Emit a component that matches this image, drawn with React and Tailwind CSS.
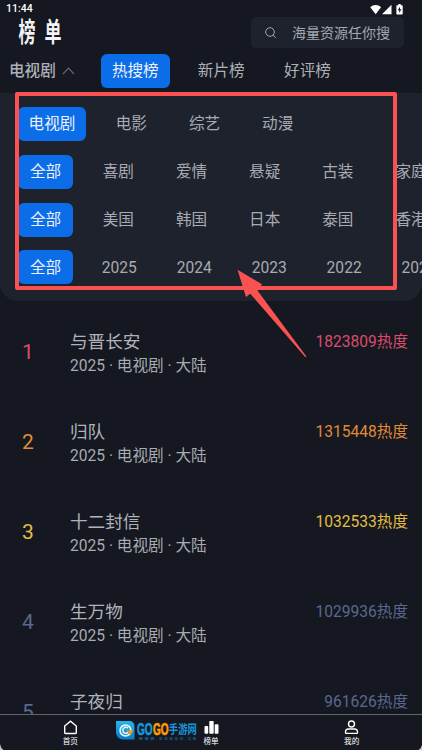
import React from 'react';

const filterRows = [
  { items: ['电视剧', '电影', '综艺', '动漫'], first: 'w-[68px]', cell: 'w-[55px]' },
  { items: ['全部', '喜剧', '爱情', '悬疑', '古装', '家庭'], first: 'w-[55px]', cell: 'w-[55px]' },
  { items: ['全部', '美国', '韩国', '日本', '泰国', '香港'], first: 'w-[55px]', cell: 'w-[55px]' },
  { items: ['全部', '2025', '2024', '2023', '2022', '2021'], first: 'w-[55px]', cell: 'w-[56.8px]' },
];

const shows = [
  { title: '与晋长安', heat: 1823809, color: 'text-[#d94c6c]' },
  { title: '归队', heat: 1315448, color: 'text-[#e08a38]' },
  { title: '十二封信', heat: 1032533, color: 'text-[#e3bd42]' },
  { title: '生万物', heat: 1029936, color: 'text-[#5a688f]' },
  { title: '子夜归', heat: 961626, color: 'text-[#5a688f]' },
];

const StatusBar = () => (
  <div className="flex h-[17px] items-center justify-between pl-[6px] pr-[19px] pt-px">
    <span className="text-[10.5px] font-medium leading-none text-white">11:44</span>
    <svg width="33" height="11" viewBox="0 0 33 11" fill="#fff">
      <path d="M0.3 3.2C3.2 0.2 8.2 0.2 11 3.2L5.7 10.2Z" />
      <path d="M21.5 0.8V10.2H12Z" />
      <path d="M27 1.2h1.4V0h2.3v1.2h1.4a0.6 0.6 0 0 1 0.6 0.6v8a0.6 0.6 0 0 1-0.6 0.6H27a0.6 0.6 0 0 1-0.6-0.6v-8a0.6 0.6 0 0 1 0.6-0.6Z" />
      <path d="M30 2.8 27.7 6.2h1.5v2.7l2.2-3.6H30Z" fill="#151820" />
    </svg>
  </div>
);

const Header = () => (
  <div className="flex h-[31px] items-center justify-between pl-[18.5px] pr-[18px]">
    <h1 className="flex origin-center translate-y-[0.5px] scale-y-[1.6] gap-[9px] text-[17px] font-bold leading-none text-[#f3f3f3]">
      <span>榜</span>
      <span>单</span>
    </h1>
    <div className="flex h-[31px] w-[153px] items-center rounded-[5px] bg-[#1e222d] pl-[14px]">
      <svg width="12" height="12" viewBox="0 0 12 12" fill="none" stroke="#a5a8b0" strokeWidth="1">
        <circle cx="5" cy="5" r="4.3" />
        <path d="M8 8.2 10.8 10.8" />
      </svg>
      <span className="ml-[15px] whitespace-nowrap text-[14px] leading-none text-[#a5a8b0]">海量资源任你搜</span>
    </div>
  </div>
);

const Tabs = () => (
  <div className="flex h-[45px] items-center pt-px text-[15.6px] leading-none text-[#aeb1b8]">
    <span className="ml-[9px] pt-[2px] font-medium">电视剧</span>
    <svg className="ml-[6px]" width="13" height="8" viewBox="0 0 13 8" fill="none" stroke="#62656e" strokeWidth="1.2">
      <path d="M1 7 6.5 1.2 12 7" />
    </svg>
    <span className="ml-[26px] flex h-[34px] w-[69px] items-center justify-center rounded-[6px] bg-[#0c6de8] pt-[2px] text-[#eef3fb]">
      热搜榜
    </span>
    <span className="ml-[28px] pt-[2px]">新片榜</span>
    <span className="ml-[39.5px] pt-[2px]">好评榜</span>
  </div>
);

const Filters = () => (
  <div className="flex h-[208px] flex-col gap-[13.8px] overflow-hidden rounded-b-[18px] bg-[#1e222d] pl-[18px] pt-[14px]">
    {filterRows.map((row, r) => (
      <div key={r} className="flex h-[34px] shrink-0 gap-[18.2px] text-[15.6px] leading-none text-[#a8abb2]">
        {row.items.map((item, i) => (
          <span
            key={item}
            className={`flex h-[34px] shrink-0 items-center justify-center rounded-[6px] pt-[2px] whitespace-nowrap ${
              i === 0 ? `${row.first} bg-[#0c6de8] text-[#eef3fb]` : `${row.cell} pr-[0.8px]`
            }`}
          >
            {item}
          </span>
        ))}
      </div>
    ))}
  </div>
);

const ShowRow = ({ rank, show }) => (
  <div className="flex h-[90px] shrink-0 items-start pr-[14px]">
    <span className={`ml-[22px] mt-[36px] w-[48px] text-[21px] leading-[20px] ${show.color}`}>{rank}</span>
    <div className="mt-[24px] flex-1">
      <div className="text-[17.6px] leading-[24px] text-[#b0b3ba]">{show.title}</div>
      <div className="text-[15.6px] leading-[25px] text-[#a8abb2]">2025 · 电视剧 · 大陆</div>
    </div>
    <span className={`mt-[24px] text-[15.6px] leading-[24px] ${show.color}`}>{show.heat}热度</span>
  </div>
);

const NavItem = ({ label, children }) => (
  <div className="flex flex-1 flex-col items-center pt-[5px] text-white">
    <svg width="15" height="15" viewBox="0 0 15 15" fill="none" stroke="#fff" strokeWidth="1.4">
      {children}
    </svg>
    <span className="mt-[2px] text-[7.6px] leading-[9px]">{label}</span>
  </div>
);

const BottomNav = () => (
  <div className="flex h-[36px] shrink-0 border-t border-[#60636b] bg-[#151820]">
    <NavItem label="首页">
      <path d="M1.7 6 7.5 1.2 13.3 6v6.8a.7.7 0 0 1-.7.7H2.4a.7.7 0 0 1-.7-.7Z" />
    </NavItem>
    <NavItem label="榜单">
      <g fill="#fff" stroke="none">
        <rect x="0.5" y="6" width="3.7" height="7.8" rx="0.8" />
        <rect x="5.3" y="1" width="4.4" height="12.8" rx="0.8" />
        <rect x="10.7" y="4.2" width="3.8" height="9.6" rx="0.8" />
      </g>
    </NavItem>
    <NavItem label="我的">
      <circle cx="7.5" cy="4" r="3" />
      <path d="M4.2 9h6.6a2.7 2.7 0 0 1 2.7 2.7v.9a.8.8 0 0 1-.8.8H2.3a.8.8 0 0 1-.8-.8v-.9A2.7 2.7 0 0 1 4.2 9Z" />
    </NavItem>
  </div>
);

const Watermark = () => (
  <svg className="absolute left-[115px] top-[720px]" width="83" height="22" viewBox="0 0 83 22">
    <defs>
      <linearGradient id="badge" x1="0" y1="0" x2="0" y2="1">
        <stop offset="0" stopColor="#27b5ee" />
        <stop offset="1" stopColor="#087bc8" />
      </linearGradient>
    </defs>
    <path d="M1 1h13.5a5 5 0 0 1 5 5v13.5H8a7 7 0 0 1-7-7Z" fill="url(#badge)" />
    <circle cx="10.5" cy="10.5" r="5.4" fill="none" stroke="#e5f5fc" strokeWidth="1.7" />
    <path d="M13 8.2a3 3 0 1 0 .2 4" fill="none" stroke="#e5f5fc" strokeWidth="1.5" />
    <path d="M10.5 10.2h8l-3.2 5.2-1.4-2.6Z" fill="#f59a0b" />
    <g fontFamily="'Liberation Sans', 'Noto Sans CJK SC', sans-serif" fontWeight="700">
      <text x="22" y="14.7" fontSize="17" textLength="15.6" lengthAdjust="spacingAndGlyphs" fill="#1397df" stroke="#1397df" strokeWidth="0.7">GO</text>
      <text x="38" y="14.7" fontSize="17" textLength="15.6" lengthAdjust="spacingAndGlyphs" fill="#fa9c08" stroke="#fa9c08" strokeWidth="0.7">GO</text>
      <text x="53.8" y="13.6" fontSize="12.5" textLength="28" lengthAdjust="spacingAndGlyphs" fill="#1595d9">手游网</text>
      <text x="24" y="19.7" fontSize="4" textLength="57" fill="#1479b0">WWW.GOGGO.CN</text>
    </g>
  </svg>
);

const Highlight = () => (
  <>
    <div className="absolute left-[15px] top-[92px] h-[198px] w-[382px] rounded-[2px] border-4 border-[#fa5252]" />
    <svg className="absolute left-[230px] top-[262px]" width="84" height="102" viewBox="0 0 84 102">
      <path d="M7.5 7.7 32 22.3 27.6 28.8 76.4 94.6 75.4 95.2 20.3 31.8 16 35Z" fill="#fa5252" />
    </svg>
  </>
);

const App = () => (
  <div className="relative flex h-[750px] w-[422px] flex-col overflow-hidden bg-[#151820] font-[Roboto,'Noto_Sans_CJK_SC',sans-serif]">
    <StatusBar />
    <Header />
    <Tabs />
    <Filters />
    <div className="flex flex-1 flex-col overflow-hidden pt-[5px]">
      {shows.map((show, i) => (
        <ShowRow key={show.title} rank={i + 1} show={show} />
      ))}
    </div>
    <BottomNav />
    <Watermark />
    <Highlight />
    <svg className="absolute bottom-0 left-0" width="422" height="6" viewBox="0 0 422 6" fill="#c5c6c8">
      <path d="M0 0Q0.6 4 3.5 6H0Z" />
      <path d="M422 1Q421.5 4 418.5 6H422Z" />
    </svg>
  </div>
);

export default App;
